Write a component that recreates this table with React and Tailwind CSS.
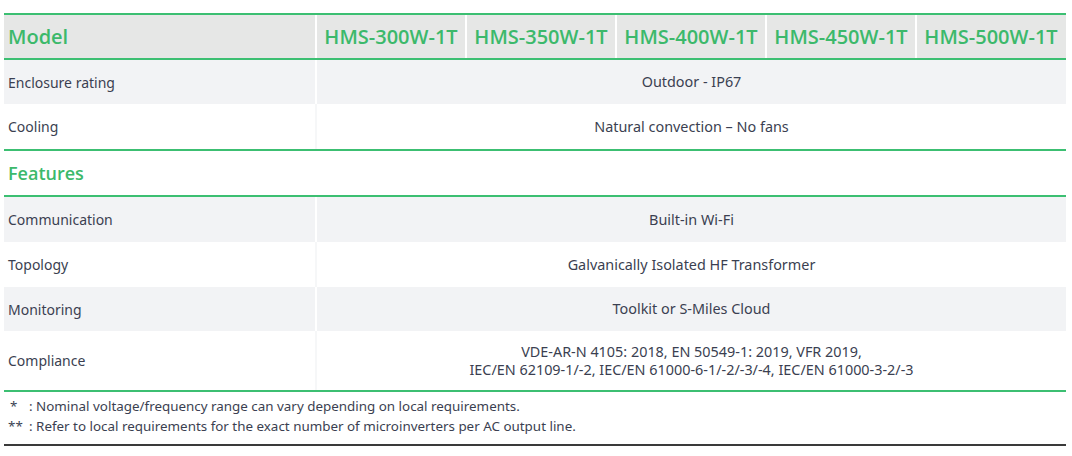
import React from "react";

const models = ["HMS-300W-1T", "HMS-350W-1T", "HMS-400W-1T", "HMS-450W-1T", "HMS-500W-1T"];

const Row = ({ label, gray, children, h }) => (
  <div className={`flex ${h} ${gray ? "bg-[#f2f3f5]" : "bg-white"}`}>
    <div className="w-[311px] flex items-center pl-[4px] text-[14px] text-[#3b3f51]">{label}</div>
    <div
      className={`flex-1 flex flex-col items-center justify-center border-l-2 text-[14.4px] leading-[18px] text-[#3b3f51] text-center ${
        gray ? "border-white" : "border-[#f6f7f8]"
      }`}
    >
      {children}
    </div>
  </div>
);

export default function App() {
  return (
    <div
      className="w-[1072px] h-[456px] bg-white pt-[13px] pl-[4px] pr-[6px] overflow-hidden"
      style={{ fontFamily: '"Noto Sans", "Open Sans", sans-serif' }}
    >
      <div className="border-t-2 border-[#3cbf72]">
        {/* header */}
        <div className="flex h-[45px] bg-[#e6e7e6] border-b-2 border-[#3cbf72] font-['Open_Sans',sans-serif]">
          <div className="w-[311px] flex items-center pl-[4px] text-[20px] font-semibold text-[#3cb96b]">
            Model
          </div>
          {models.map((m) => (
            <div
              key={m}
              className="w-[150px] flex items-center justify-center border-l-2 border-white text-[20px] font-semibold text-[#3cb96b]"
            >
              {m}
            </div>
          ))}
        </div>

        <Row label="Enclosure rating" gray h="h-[44px]">
          Outdoor - IP67
        </Row>
        <Row label="Cooling" h="h-[45px]">
          Natural convection – No fans
        </Row>

        <div className="flex h-[48px] items-center bg-white border-y-2 border-[#3cbf72] pl-[4px] text-[18px] font-semibold text-[#3cb96b] font-['Open_Sans',sans-serif]">
          Features
        </div>

        <Row label="Communication" gray h="h-[45px]">
          Built-in Wi-Fi
        </Row>
        <Row label="Topology" h="h-[45px]">
          Galvanically Isolated HF Transformer
        </Row>
        <Row label="Monitoring" gray h="h-[44px]">
          Toolkit or S-Miles Cloud
        </Row>
        <Row label="Compliance" h="h-[59px]">
          <span>VDE-AR-N 4105: 2018, EN 50549-1: 2019, VFR 2019,</span>
          <span>IEC/EN 62109-1/-2, IEC/EN 61000-6-1/-2/-3/-4, IEC/EN 61000-3-2/-3</span>
        </Row>

        <div className="border-t-2 border-[#3cbf72] pt-[4px] pb-[8px] pl-[4px] text-[13.4px] leading-[20px] text-[#3b3f51]">
          <div className="flex">
            <span className="w-[21px] pl-[2px]">*</span>
            <span>: Nominal voltage/frequency range can vary depending on local requirements.</span>
          </div>
          <div className="flex">
            <span className="w-[21px]">**</span>
            <span>: Refer to local requirements for the exact number of microinverters per AC output line.</span>
          </div>
        </div>
        <div className="border-t-2 border-[#3a3a3a]" />
      </div>
    </div>
  );
}
